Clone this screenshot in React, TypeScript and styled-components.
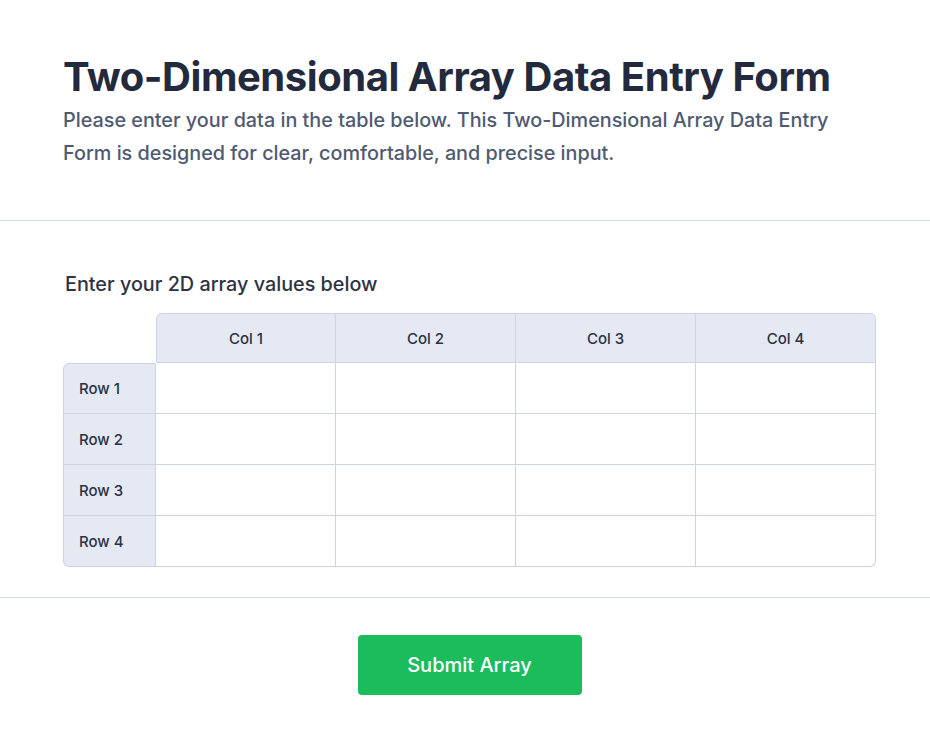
import styled, { createGlobalStyle } from 'styled-components';

const GlobalStyle = createGlobalStyle`
  * {
    box-sizing: border-box;
  }
  body {
    background: #fff;
    font-family: Inter, "Noto Sans", sans-serif;
    margin: 0;
  }
`;

const StyledPage = styled.main`
  display: flex;
  flex-direction: column;
  min-height: 744px;
`;

const StyledSection = styled.section<{ $top: number; $bottom: number; $border?: boolean }>`
  border-bottom: ${({ $border }) => ($border ? '1px solid #d6dae6' : 'none')};
  padding: ${({ $top, $bottom }) => `${$top}px 54px ${$bottom}px 63px`};
`;

const StyledTitle = styled.h1`
  color: #232a3d;
  font-size: 40px;
  font-weight: 700;
  letter-spacing: -0.45px;
  line-height: 48px;
  margin: 0 0 3px;
`;

const StyledIntro = styled.p`
  color: #4f5a71;
  font-size: 19.8px;
  font-weight: 500;
  line-height: 33px;
  margin: 0;
  max-width: 790px;
`;

const StyledLabel = styled.h2`
  color: #2d3342;
  font-size: 19.8px;
  font-weight: 500;
  line-height: 30px;
  margin: 0 0 14px 2px;
`;

const StyledGrid = styled.div`
  display: grid;
  grid-template-columns: 93px repeat(4, 180px);
  grid-template-rows: 50px repeat(4, 51px);
`;

const StyledCorner = styled.div``;

const StyledColHead = styled.div<{ $first?: boolean; $last?: boolean }>`
  align-items: center;
  background: #e5e9f4;
  border-bottom: 1px solid #cdd3e3;
  border-left: ${({ $first }) => ($first ? '1px solid #cdd3e3' : 'none')};
  border-right: 1px solid #cdd3e3;
  border-top: 1px solid #cdd3e3;
  border-radius: ${({ $first, $last }) =>
    $first ? '6px 0 0 0' : $last ? '0 6px 0 0' : '0'};
  color: #2a3142;
  display: flex;
  font-size: 15px;
  font-weight: 500;
  justify-content: center;
`;

const StyledRowHead = styled.div<{ $first?: boolean; $last?: boolean }>`
  align-items: center;
  background: #e5e9f4;
  border-bottom: 1px solid #cdd3e3;
  border-left: 1px solid #cdd3e3;
  border-right: 1px solid #cdd3e3;
  border-top: ${({ $first }) => ($first ? '1px solid #cdd3e3' : 'none')};
  border-radius: ${({ $first, $last }) =>
    $first ? '6px 0 0 0' : $last ? '0 0 0 6px' : '0'};
  color: #2a3142;
  display: flex;
  font-size: 15px;
  font-weight: 500;
  padding-left: 15px;
`;

const StyledCell = styled.div<{ $corner?: boolean }>`
  border-bottom: 1px solid #cdd3e3;
  border-bottom-right-radius: ${({ $corner }) => ($corner ? '6px' : '0')};
  border-right: 1px solid #cdd3e3;
  display: flex;
`;

const StyledInput = styled.input`
  background: transparent;
  border: none;
  color: #232a3d;
  font: inherit;
  font-size: 15px;
  height: 100%;
  outline: none;
  padding: 0 12px;
  width: 100%;
`;

const StyledFooter = styled.div`
  display: flex;
  justify-content: center;
  padding: 37px 54px 0 63px;
`;

const StyledButton = styled.button.attrs({ type: 'button' })`
  background: #1bbc5c;
  border: none;
  border-radius: 4px;
  color: #fff;
  cursor: pointer;
  font-family: Inter, "Noto Sans", sans-serif;
  font-size: 20px;
  font-weight: 500;
  height: 60px;
  width: 224px;
`;

const columns = ['Col 1', 'Col 2', 'Col 3', 'Col 4'];
const rows = ['Row 1', 'Row 2', 'Row 3', 'Row 4'];

const ArrayGrid = () => (
  <StyledGrid role="table">
    <StyledCorner />
    {columns.map((col, i) => (
      <StyledColHead key={col} $first={i === 0} $last={i === columns.length - 1}>
        {col}
      </StyledColHead>
    ))}
    {rows.map((row, r) => [
      <StyledRowHead key={row} $first={r === 0} $last={r === rows.length - 1}>
        {row}
      </StyledRowHead>,
      ...columns.map((col, c) => (
        <StyledCell
          key={`${row}-${col}`}
          $corner={r === rows.length - 1 && c === columns.length - 1}
        >
          <StyledInput aria-label={`${row} ${col}`} />
        </StyledCell>
      ))
    ])}
  </StyledGrid>
);

const App = () => (
  <>
    <GlobalStyle />
    <StyledPage>
      <StyledSection $top={53} $bottom={50} $border>
        <StyledTitle>Two-Dimensional Array Data Entry Form</StyledTitle>
        <StyledIntro>
          Please enter your data in the table below. This Two-Dimensional Array Data Entry
          Form is designed for clear, comfortable, and precise input.
        </StyledIntro>
      </StyledSection>
      <StyledSection $top={48} $bottom={30} $border>
        <StyledLabel>Enter your 2D array values below</StyledLabel>
        <ArrayGrid />
      </StyledSection>
      <StyledFooter>
        <StyledButton>Submit Array</StyledButton>
      </StyledFooter>
    </StyledPage>
  </>
);

export default App;
